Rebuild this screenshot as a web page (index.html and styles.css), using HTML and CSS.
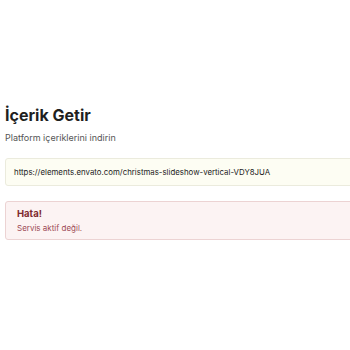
FILE: index.html
```html
<!DOCTYPE html>
<html lang="tr">
<head>
<meta charset="utf-8">
<link rel="stylesheet" href="styles.css">
</head>
<body>
<main class="page">
  <h1 class="title">İçerik Getir</h1>
  <p class="subtitle">Platform içeriklerini indirin</p>
  <div class="url-input">https://elements.envato.com/christmas-slideshow-vertical-VDY8JUA</div>
  <div class="alert">
    <div class="alert-title">Hata!</div>
    <div class="alert-text">Servis aktif değil.</div>
  </div>
</main>
</body>
</html>
```
FILE: styles.css
```css
html, body {
  margin: 0;
  padding: 0;
  background: #ffffff;
}
body {
  font-family: Inter, "Noto Sans", sans-serif;
  width: 350px;
  height: 350px;
  overflow: hidden;
}
.page {
  padding: 103px 0 0 5px;
  width: 360px;
}
.title {
  margin: 0;
  font-size: 16px;
  line-height: 24px;
  font-weight: 700;
  color: #1f1f1f;
}
.subtitle {
  margin: 5px 0 0;
  font-size: 9px;
  line-height: 12px;
  color: #555555;
}
.url-input {
  margin-top: 14px;
  height: 28px;
  box-sizing: border-box;
  border: 1px solid #ebebdd;
  border-radius: 3px;
  background: #fdfdf3;
  padding: 0 8px;
  font-size: 7.85px;
  line-height: 26px;
  color: #222222;
  white-space: nowrap;
}
.alert {
  margin-top: 15px;
  height: 39px;
  box-sizing: border-box;
  border: 1px solid #ecd3d3;
  border-radius: 3px;
  background: #fcf3f3;
  padding: 5px 11px;
}
.alert-title {
  font-size: 9.5px;
  line-height: 14px;
  font-weight: 700;
  color: #7f2a2e;
}
.alert-text {
  font-size: 8px;
  line-height: 14px;
  color: #9c4a55;
}
```
